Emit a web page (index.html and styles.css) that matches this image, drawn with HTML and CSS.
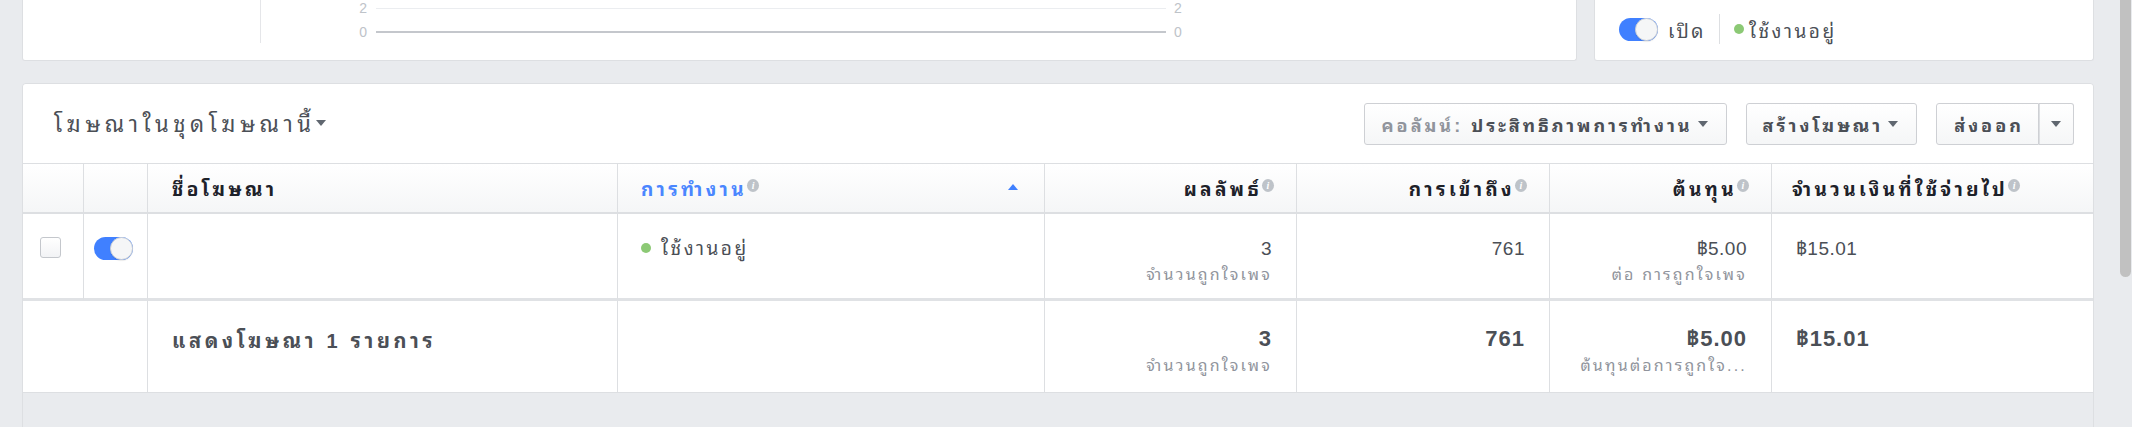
FILE: index.html
```html
<!DOCTYPE html>
<html lang="th">
<head>
<meta charset="utf-8">
<title>Ads</title>
<link rel="stylesheet" href="styles.css">
</head>
<body>
<div class="page">
  <div class="top-row">
    <div class="card chart-card">
      <div class="chart-side"></div>
      <div class="chart">
        <div class="chart-line">
          <span class="axis axis-left">2</span><span class="grid-line light"></span><span class="axis axis-right">2</span>
        </div>
        <div class="chart-line">
          <span class="axis axis-left">0</span><span class="grid-line base"></span><span class="axis axis-right">0</span>
        </div>
      </div>
    </div>
    <div class="card status-card">
      <span class="toggle"><span class="knob"></span></span>
      <span class="status-label">เปิด</span>
      <span class="vdivider"></span>
      <span class="dot"></span>
      <span class="status-label">ใช้งานอยู่</span>
    </div>
  </div>

  <div class="card table-card">
    <div class="table-head">
      <div class="title">โฆษณาในชุดโฆษณานี้<span class="caret"></span></div>
      <div class="actions">
        <button class="btn"><span class="muted">คอลัมน์:</span>&nbsp;ประสิทธิภาพการทำงาน<span class="caret"></span></button>
        <button class="btn">สร้างโฆษณา<span class="caret"></span></button>
        <div class="split">
          <button class="btn btn-main">ส่งออก</button>
          <button class="btn btn-arrow"><span class="caret"></span></button>
        </div>
      </div>
    </div>

    <div class="grid-table">
      <div class="th"></div>
      <div class="th"></div>
      <div class="th th-name">ชื่อโฆษณา</div>
      <div class="th th-sorted"><span class="blue">การทำงาน</span><span class="info">i</span><span class="sort-up"></span></div>
      <div class="th right">ผลลัพธ์<span class="info">i</span></div>
      <div class="th right">การเข้าถึง<span class="info">i</span></div>
      <div class="th right">ต้นทุน<span class="info">i</span></div>
      <div class="th th-last">จำนวนเงินที่ใช้จ่ายไป<span class="info">i</span></div>

      <div class="td td-check"><span class="checkbox"></span></div>
      <div class="td td-toggle"><span class="toggle"><span class="knob"></span></span></div>
      <div class="td td-name"></div>
      <div class="td td-status"><span class="dot"></span>ใช้งานอยู่</div>
      <div class="td right"><div class="num">3</div><div class="sub">จำนวนถูกใจเพจ</div></div>
      <div class="td right"><div class="num">761</div></div>
      <div class="td right"><div class="num">฿5.00</div><div class="sub">ต่อ การถูกใจเพจ</div></div>
      <div class="td td-last"><div class="num">฿15.01</div></div>

      <div class="tf tf-lead"></div>
      <div class="tf tf-label">แสดงโฆษณา 1 รายการ</div>
      <div class="tf"></div>
      <div class="tf right"><div class="strong">3</div><div class="sub">จำนวนถูกใจเพจ</div></div>
      <div class="tf right"><div class="strong">761</div></div>
      <div class="tf right"><div class="strong">฿5.00</div><div class="sub">ต้นทุนต่อการถูกใจ...</div></div>
      <div class="tf tf-last"><div class="strong">฿15.01</div></div>
    </div>
    <div class="table-foot"></div>
  </div>
</div>
<div class="scrollbar"></div>
</body>
</html>
```

FILE: styles.css
```css
* { box-sizing: border-box; }

html, body {
  margin: 0;
  padding: 0;
  height: 100%;
  overflow: hidden;
}

body {
  background: #e9ebee;
  font-family: "Liberation Sans", "Noto Sans Thai Looped", "Noto Sans Thai", sans-serif;
  color: #4b4f56;
}

.page {
  width: 2094px;
  padding-left: 22px;
}

.card {
  background: #fff;
  border: 1px solid #dddfe2;
  border-radius: 3px;
}

/* ---------- top cards ---------- */
.top-row {
  display: flex;
  gap: 17px;
  height: 61px;
}

.chart-card {
  width: 1555px;
  border-top: none;
  border-radius: 0 0 3px 3px;
  display: flex;
  align-items: flex-start;
}

.chart-side {
  width: 238px;
  height: 43px;
  border-right: 1px solid #e5e6e9;
}

.chart {
  display: flex;
  flex-direction: column;
  gap: 10px;
  padding-top: 1px;
}

.chart-line {
  display: flex;
  align-items: center;
  height: 14px;
}

.axis {
  font-size: 14px;
  color: #bec3c9;
  line-height: 14px;
}

.axis-left {
  width: 106px;
  text-align: right;
}

.axis-right {
  padding-left: 8px;
}

.grid-line {
  width: 790px;
  margin-left: 9px;
  display: block;
}

.grid-line.light {
  height: 1px;
  background: #ebedf0;
}

.grid-line.base {
  height: 2px;
  background: #c4c7cc;
}

.status-card {
  flex: 1;
  border-top: none;
  border-radius: 0 0 3px 3px;
  display: flex;
  align-items: center;
  padding: 0 0 2px 24px;
  height: 61px;
}

.status-label {
  font-size: 19px;
  color: #4b4f56;
  letter-spacing: 2.5px;
}

.status-card .toggle {
  margin-right: 10px;
}

.vdivider {
  width: 1px;
  height: 30px;
  background: #dddfe2;
  margin: 0 14px 0 13px;
}

.dot {
  display: inline-block;
  width: 10px;
  height: 10px;
  border-radius: 50%;
  background: #8cc975;
  margin-right: 5px;
}

/* ---------- toggle / checkbox ---------- */
.toggle {
  position: relative;
  display: inline-block;
  width: 39px;
  height: 23px;
  border-radius: 12px;
  background: #4080ff;
  flex: none;
}

.knob {
  position: absolute;
  right: 0;
  top: 0;
  width: 23px;
  height: 23px;
  border-radius: 50%;
  background: #f5f6f7;
  border: 1px solid #ccd0d5;
  box-shadow: 0 1px 1px rgba(0, 0, 0, 0.08);
}

.checkbox {
  display: inline-block;
  width: 21px;
  height: 21px;
  border: 1px solid #c4c7cc;
  border-radius: 3px;
  background: linear-gradient(#fff, #f2f3f5);
}

/* ---------- table card ---------- */
.table-card {
  margin-top: 22px;
  width: 2072px;
  border-radius: 4px 4px 0 0;
  background: #e9ebee;
  overflow: hidden;
}

.table-head {
  height: 80px;
  background: #fff;
  border-bottom: 1px solid #dddfe2;
  display: flex;
  align-items: center;
  justify-content: space-between;
  padding: 0 19px 0 31px;
}

.title {
  font-size: 22px;
  color: #4b4f56;
  display: flex;
  align-items: center;
  padding-bottom: 4px;
  letter-spacing: 4.6px;
}

.title .caret {
  margin-left: 0;
  margin-top: 3px;
}

.caret {
  display: inline-block;
  width: 0;
  height: 0;
  border-left: 5px solid transparent;
  border-right: 5px solid transparent;
  border-top: 6px solid #606770;
}

.actions {
  display: flex;
  gap: 19px;
  align-items: center;
}

.btn {
  height: 42px;
  padding: 0 18px 0 16px;
  border: 1px solid #ced0d4;
  border-radius: 3px;
  background: linear-gradient(#fff, #f5f6f7);
  font-family: inherit;
  font-size: 18px;
  font-weight: bold;
  color: #4b4f56;
  display: flex;
  align-items: center;
  cursor: pointer;
  letter-spacing: 3px;
}

.btn .caret {
  margin-left: 5px;
}

.muted {
  color: #90949c;
}

.split {
  display: flex;
}

.btn-main {
  border-radius: 3px 0 0 3px;
  padding: 0 14px 0 17px;
}

.btn-arrow {
  border-left: none;
  border-radius: 0 3px 3px 0;
  padding: 0 12px;
  width: 35px;
  justify-content: center;
  box-shadow: inset 1px 0 0 #dddfe2;
}

.btn-arrow .caret {
  margin-left: 0;
}

/* ---------- grid ---------- */
.grid-table {
  display: grid;
  grid-template-columns: 61px 64px 470px 427px 252px 253px 222px 1fr;
  background: #fff;
}

.th {
  height: 50px;
  background: linear-gradient(#fff, #f5f6f7);
  border-right: 1px solid #dddfe2;
  border-bottom: 2px solid #dddfe2;
  display: flex;
  align-items: center;
  padding: 0 22px 2px 24px;
  font-size: 19px;
  font-weight: bold;
  color: #1d2129;
  letter-spacing: 3.4px;
}

.th-last {
  border-right: none;
  padding-left: 20px;
}

.th.right {
  justify-content: flex-end;
}

.th-sorted {
  padding-left: 23px;
  padding-right: 26px;
}

.blue {
  color: #4a86ff;
}

.sort-up {
  margin-left: auto;
  width: 0;
  height: 0;
  border-left: 5px solid transparent;
  border-right: 5px solid transparent;
  border-bottom: 6px solid #4080ff;
}

.info {
  display: inline-flex;
  align-items: center;
  justify-content: center;
  width: 12px;
  height: 13px;
  border-radius: 50%;
  background: #bec3c9;
  color: #fff;
  font-family: "Liberation Serif", serif;
  font-style: italic;
  font-weight: bold;
  font-size: 10px;
  margin-left: 0;
  align-self: flex-start;
  margin-top: 15px;
  letter-spacing: 0;
}

.td {
  height: 87px;
  border-right: 1px solid #dddfe2;
  border-bottom: 3px solid #e0e2e5;
  padding: 24px 24px 0 24px;
  font-size: 19px;
  line-height: 22px;
  color: #4b4f56;
  letter-spacing: 2.5px;
}

.td-last {
  border-right: none;
}

.td.right,
.tf.right {
  text-align: right;
}

.td-check {
  padding: 23px 0 0 17px;
}

.td-toggle {
  padding: 23px 0 0 10px;
}

.td-status {
  padding-left: 23px;
}

.td-status .dot {
  margin-right: 10px;
  position: relative;
  top: -2px;
}

.num {
  font-size: 19px;
  letter-spacing: 0.5px;
}

.sub {
  font-size: 16px;
  line-height: 20px;
  margin-top: 5px;
  color: #90949c;
  letter-spacing: 2.2px;
}

.tf {
  height: 92px;
  border-right: 1px solid #dddfe2;
  border-bottom: 1px solid #dddfe2;
  padding: 27px 24px 0 24px;
  font-size: 18px;
  line-height: 22px;
}

.tf-last {
  border-right: none;
}

.tf-lead {
  grid-column: span 2;
}

.tf-label {
  font-size: 20px;
  font-weight: bold;
  color: #4b4f56;
  padding-top: 29px;
  letter-spacing: 3.7px;
}

.strong {
  font-weight: bold;
  font-size: 22px;
  color: #4b4f56;
  letter-spacing: 1px;
}

.tf .sub {
  margin-top: 6px;
}

.table-foot {
  height: 40px;
  background: #e9ebee;
}

.scrollbar {
  position: fixed;
  top: 0;
  right: 1px;
  width: 11px;
  height: 277px;
  background: #c1c1c1;
  border-radius: 0 0 6px 6px;
}
```
